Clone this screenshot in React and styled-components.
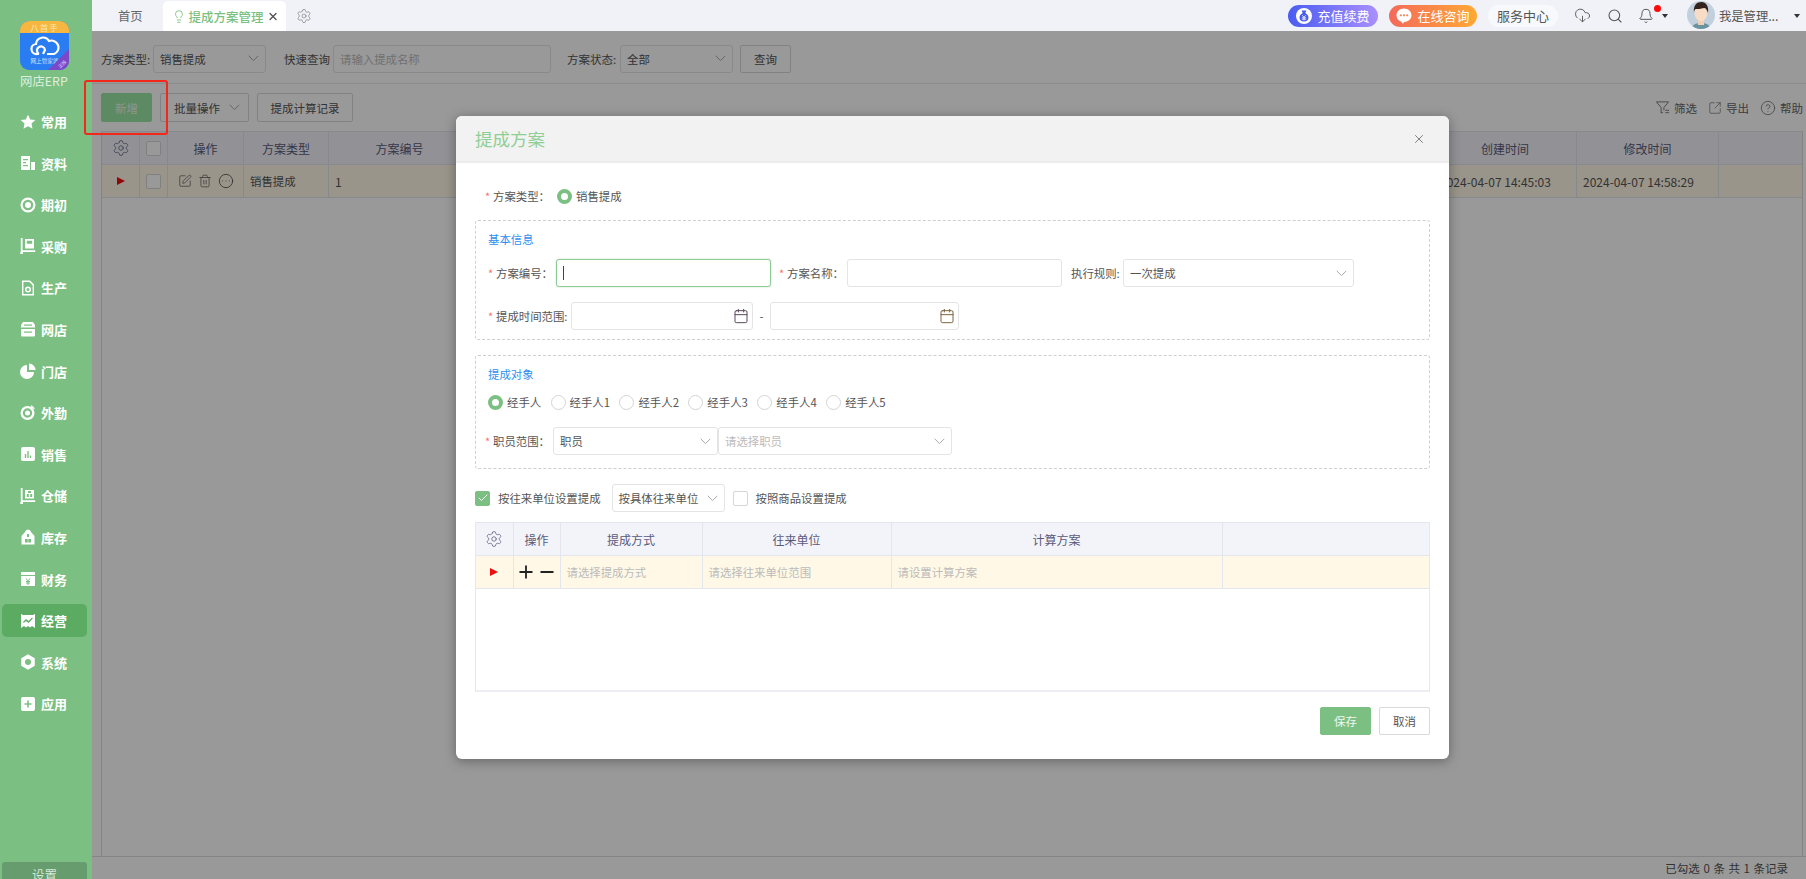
import React from 'react';
import styled, { createGlobalStyle } from 'styled-components';
import { Settings, Calendar, X, Search, Bell, CloudDownload, Lightbulb, SquarePen, Trash2, CircleEllipsis, Plus, Minus, Check, CircleHelp, SquareArrowOutUpRight } from 'lucide-react';

const Global = createGlobalStyle`
  html, body { margin: 0; height: 100%; overflow: hidden; background: #fff; }
  #root { height: 100%; }
  * { box-sizing: border-box; }
  body { font-family: "Noto Sans CJK SC", "Noto Sans", sans-serif; font-size: 11.4px; color: #555; }
`;

const Shell = styled.div`display: flex; width: 100vw; height: 100vh; overflow: hidden;`;

/* Sidebar */
const Sidebar = styled.aside`
  width: 92px; flex: none; background: #7cbf82; display: flex; flex-direction: column;
  align-items: stretch; padding-top: 21px; overflow: hidden; position: relative;
`;
const LogoBox = styled.div`
  width: 49px; height: 49px; margin-left: 20px; border-radius: 9px; overflow: hidden; position: relative;
  background: #2a7cf2; display: flex; flex-direction: column; align-items: center;
`;
const LogoBand = styled.div`
  width: 100%; height: 12px; background: #f6b740; color: #fbe7b0; font-size: 8.5px; line-height: 12px; text-align: center; letter-spacing: 1px;
`;
const LogoSmall = styled.div`
  color: #cfe2ff; font-size: 5.6px; line-height: 8px; white-space: nowrap; margin-top: 0;
`;
const LogoRibbon = styled.div`
  position: absolute; right: 0; bottom: 0; width: 21px; height: 21px; background: #7b49c8;
  clip-path: polygon(100% 0, 100% 100%, 0 100%); display: flex; align-items: flex-end; justify-content: flex-end;
`;
const RibbonText = styled.span`
  color: #e5d6ff; font-size: 4.5px; line-height: 10px; width: 14px; height: 10px; text-align: center; transform: rotate(-45deg); margin: 0 0 1px 0;
`;
const LogoName = styled.div`
  margin: 3px 0 0 20px; color: #dcefdf; font-size: 12.4px; line-height: 17px; white-space: nowrap;
`;
const Nav = styled.nav`display: flex; flex-direction: column; gap: 8.6px; margin-top: 15px;`;
const NavItem = styled.div`
  width: 85px; height: 33px; margin-left: 2px; border-radius: 5px; padding-left: 18px;
  display: flex; align-items: center; gap: 5px; color: #fff; font-size: 13px; font-weight: 700;
  background: ${p => (p.$active ? '#5bab63' : 'transparent')};
  svg { flex: none; }
`;
const SettingBtn = styled.div`
  margin: auto 0 -9px 2px; width: 85px; height: 26px; flex: none; background: #679c6e; border-radius: 3px; color: #d6e8d8;
  font-size: 12.5px; text-align: center; line-height: 26px;
`;

const navIcons = {
  star: <path d="M8 .8l2.2 4.7 5.1.6-3.8 3.5 1 5.1L8 12.2l-4.5 2.5 1-5.1L.7 6.1l5.1-.6z" />,
  doc: <path fillRule="evenodd" d="M1 1h9v14H1zM3 4v1.3h5V4zm0 3v1.3h3V7zm0 3v1.3h5V10zM11 7h4v8h-4z" />,
  ring: <path fillRule="evenodd" d="M8 .5a7.5 7.5 0 100 15 7.500 7.500 0 000-15zm0 2.200a5.300 5.300 0 110 10.600A5.300 5.300 0 018 2.700zm0 2.300a3 3 0 100 6 3 3 0 000-6z" />,
  cart: <path fillRule="evenodd" d="M.8 0h1.800v12.200h12.600V14H2.600a1.400 1.400 0 11-2 0H.8zM5 1h9v9.500H5zm1.800 1.700v3h5.400v-3z" />,
  file: <path fillRule="evenodd" d="M2 .5h8l4 4V15.500H2zM3.400 2v12h9.200V5.200L9.400 2zM8 6.500a3 3 0 110 6 3 3 0 010-6zm0 1.500a1.500 1.500 0 100 3 1.500 1.500 0 000-3z" />,
  shop: <path fillRule="evenodd" d="M3 1h10l2 3v2.500H1V4zM4 3.500V4.800h8V3.500zM1 8h14v6.500a1 1 0 01-1 1H2a1 1 0 01-1-1zm3 2.400v1.300h8v-1.300z" />,
  pie: <path fillRule="evenodd" d="M7 2v7h7a7 7 0 11-7-7zM9 .5a6.500 6.500 0 016.500 6.500H9z" />,
  target: <path fillRule="evenodd" d="M7.500 1a7 7 0 017 7 7 7 0 11-7-7zm0 2.300a4.700 4.700 0 100 9.400 4.700 4.700 0 000-9.400zm0 2.200a2.500 2.500 0 110 5 2.500 2.500 0 010-5zM11.500 0l3.500 3.500-2 .5-2-2z" />,
  bars: <path fillRule="evenodd" d="M3 1h10a2 2 0 012 2v10a2 2 0 01-2 2H3a2 2 0 01-2-2V3a2 2 0 012-2zm1.800 7v4h1.400V8zm2.500-3v7h1.400V5zm2.500 4.500V12h1.400V9.500z" />,
  store: <path fillRule="evenodd" d="M.8 0h1.800v12.200h12.600V14H2.600a1.400 1.400 0 11-2 0H.8zM5 2h9v8.500H5zm1.800 4v3h2v-3zm3.400 0v3h2V6zM8 3v2h3V3z" />,
  house: <path fillRule="evenodd" d="M8 .5a3 3 0 013 2.500l3.500 4v8.500h-13V7L5 3A3 3 0 018 .5zm-3 9.500v3.500h2.800V10zm3.300 0v3.500H11V10zM7 5v3h2V5z" />,
  money: <path fillRule="evenodd" d="M1 1h14v3H1zM1 5h14v10H1zm5.500 2.500L8 9.500l1.500-2h1L8.600 10H10v1H8.500v.6H10v1H8.500V14h-1v-1.400H6v-1h1.500V11H6v-1h1.400L5.500 7.500z" />,
  chart: <path fillRule="evenodd" d="M1 1l2 1h10l2-1v14l-3-2-2 1.500L8 13l-2 1.500L4 13l-3 2zm2 8l3-3 2.500 2L12 4.500l.8 1L8.500 10 6 8l-2.300 2z" />,
  hex: <path fillRule="evenodd" d="M8 .3l6.800 3.900v7.600L8 15.700 1.200 11.800V4.200zM8 5a3 3 0 100 6 3 3 0 000-6z" />,
  add: <path fillRule="evenodd" d="M3 1h10a2 2 0 012 2v10a2 2 0 01-2 2H3a2 2 0 01-2-2V3a2 2 0 012-2zm4.200 3.500v2.700H4.500v1.600h2.700v2.700h1.600V8.800h2.700V7.200H8.800V4.500z" />,
};
const NavIcon = ({ name }) => <svg width="16" height="16" viewBox="0 0 16 16" fill="#fff">{navIcons[name]}</svg>;

const navData = [
  ['star', '常用'], ['doc', '资料'], ['ring', '期初'], ['cart', '采购'], ['file', '生产'], ['shop', '网店'], ['pie', '门店'], ['target', '外勤'],
  ['bars', '销售'], ['store', '仓储'], ['house', '库存'], ['money', '财务'], ['chart', '经营'], ['hex', '系统'], ['add', '应用'],
];

/* Top bar */
const Main = styled.div`flex: 1; min-width: 0; display: flex; flex-direction: column;`;
const TopBar = styled.header`
  height: 31px; flex: none; background: #f0f2f7; display: flex; align-items: center; padding: 0 6px 0 26px; position: relative;
`;
const HomeTab = styled.div`font-size: 12.3px; color: #666; margin-right: 20px; line-height: 30px;`;
const ActiveTab = styled.div`
  height: 30px; align-self: flex-end; background: #fff; border-radius: 5px 5px 0 0; display: flex; align-items: center;
  padding: 0 7px 0 9px; width: 123px; color: #7cbf82; font-size: 12.5px; font-weight: 500; gap: 3px;
  span { flex: 1; white-space: nowrap; }
`;
const TabGear = styled.div`margin-left: 10px; display: flex; color: #777;`;
const TopRight = styled.div`margin-left: auto; display: flex; align-items: center; height: 100%;`;
const Pill = styled.div`
  width: ${p => p.$w}px; height: 22px; border-radius: 11px; margin-right: ${p => p.$mr}px; background: ${p => p.$bg};
  color: ${p => p.$color}; font-size: 13px; display: flex; align-items: center; justify-content: center; gap: 5px; white-space: nowrap;
`;
const TopIcon = styled.div`display: flex; color: #555; margin-right: ${p => p.$mr}px; position: relative;`;
const RedDot = styled.div`position: absolute; top: -3px; right: -7px; width: 7px; height: 7px; border-radius: 50%; background: #ff0a0a;`;
const Caret = styled.div`
  width: 0; height: 0; border: 3px solid transparent; border-top: 4px solid #333; border-bottom: 0; margin-right: ${p => p.$mr}px; margin-left: ${p => p.$ml || 0}px;
`;
const UserName = styled.div`font-size: 12.3px; color: #555; white-space: nowrap; width: 66px; margin-left: 4px;`;
const Avatar = () => (
  <svg width="28" height="29" viewBox="0 0 28 29">
    <defs><clipPath id="av"><circle cx="14" cy="14" r="14" /></clipPath></defs>
    <g clipPath="url(#av)">
      <rect width="28" height="29" fill="#c2cfdd" />
      <path d="M4 29c1-6 6-7 10-7s9 1 10 7z" fill="#6a93a0" />
      <rect x="11" y="17" width="6" height="7" fill="#f1cfb5" />
      <ellipse cx="14" cy="12" rx="6.500" ry="8" fill="#f8dcc5" />
      <path d="M7 12C6 4 10 1 14.500 1S22 5 21 12c-1-3-2-5-4-5-3 1-7 1-8 1s-2 1-2 4z" fill="#33231c" />
    </g>
  </svg>
);

/* Content */
const Content = styled.div`flex: 1; min-height: 0; position: relative; display: flex; flex-direction: column; background: #fff;`;
const FilterBar = styled.div`
  height: 53px; flex: none; border-bottom: 1px solid #e9e9e9; display: flex; align-items: center; padding: 3px 0 0 9px; font-size: 11.5px;
`;
const Label = styled.div`
  flex: none; white-space: nowrap; width: ${p => p.$w}px; margin-left: ${p => p.$ml || 0}px; color: #555; display: flex; align-items: center;
`;
const Star = styled.i`font-style: normal; color: #f5736a; width: 8px; flex: none; font-size: 11px;`;
const Field = styled.div`
  flex: none; width: ${p => p.$w}px; height: ${p => p.$h || 28}px; border: 1px solid ${p => (p.$focus ? '#8fcb95' : '#e4e4e4')}; border-radius: 3px; background: #fff;
  margin-left: ${p => p.$ml || 0}px; display: flex; align-items: center; padding: 0 ${p => p.$pr || 6}px 0 6px; justify-content: space-between;
  color: ${p => (p.$ph ? '#bbb' : '#555')}; white-space: nowrap; font-size: 11.4px;
  box-shadow: ${p => (p.$focus ? '0 0 2px #b5dfb9' : 'none')};
`;
const TextCaret = styled.div`width: 1px; height: 14px; background: #444;`;
const Chevron = () => <svg width="11" height="7" viewBox="0 0 11 7" fill="none" stroke="#a9a9a9" strokeWidth="1"><path d="M.7.8l4.800 4.800L10.300.8" /></svg>;

const ToolBar = styled.div`height: 47px; flex: none; padding: 9px 3px 0 9px; display: flex; align-items: flex-start;`;
const Btn = styled.div`
  flex: none; width: ${p => p.$w}px; height: ${p => p.$h || 29}px; margin-left: ${p => p.$ml || 0}px; margin-right: ${p => p.$mr || 0}px; border-radius: 2px;
  background: ${p => p.$bg || '#fff'}; color: ${p => (p.$bg ? '#eef8f0' : '#555')}; padding: ${p => (p.$split ? '0 8px 0 13px' : '0')};
  border: 1px solid ${p => p.$bg || '#d9d9d9'}; display: flex; align-items: center; justify-content: ${p => (p.$split ? 'space-between' : 'center')}; font-size: 11.5px; white-space: nowrap;
`;
const ToolLinks = styled.div`margin-left: auto; display: flex; align-items: center; height: 29px; color: #666; font-size: 11.5px;`;
const ToolLink = styled.div`display: flex; align-items: center; gap: 4px; margin-left: 11px; color: #666; svg { flex: none; }`;

const TableBox = styled.div`
  flex: 1; min-height: 0; margin: 0 3px 0 9px; border-left: 1px solid #ddd; border-right: 1px solid #ddd;
`;
const HeadRow = styled.div`
  display: grid; grid-template-columns: ${p => p.$cols}; height: ${p => p.$h}px; background: #f3f4fa; border-top: 1px solid #e3e5ef; border-bottom: 1px solid #e3e5ef;
`;
const BodyRow = styled.div`
  display: grid; grid-template-columns: ${p => p.$cols}; height: ${p => p.$h}px; background: #fff8e6; border-bottom: 1px solid #e3e5ef;
`;
const Cell = styled.div`
  display: flex; align-items: center; justify-content: ${p => (p.$center ? 'center' : 'flex-start')}; gap: ${p => p.$gap || 0}px; padding: 0 ${p => (p.$center ? 0 : 6)}px;
  border-right: 1px solid #e3e5ef; color: ${p => (p.$ph ? '#bbb' : p.$head ? '#5a5a7a' : '#555')}; font-size: ${p => p.$fs || 12}px; white-space: nowrap; overflow: hidden;
  &:last-child { border-right: 0; }
`;
const Box = styled.div`
  width: 15px; height: 15px; border: 1px solid #d6d6d6; border-radius: 2px; background: ${p => (p.$on ? '#7cbf82' : '#fff')}; flex: none;
  display: flex; align-items: center; justify-content: center; color: #fff;
  margin-right: ${p => p.$mr || 0}px; margin-left: ${p => p.$ml || 0}px; border-color: ${p => (p.$on ? '#7cbf82' : '#d6d6d6')};
`;
const RedTri = styled.div`width: 0; height: 0; border-left: 8px solid #f20d0d; border-top: 4px solid transparent; border-bottom: 4px solid transparent;`;
const FootBar = styled.div`
  height: 23px; flex: none; border-top: 1px solid #ddd; display: flex; align-items: center; justify-content: flex-end; padding-right: 18px; font-size: 11.5px; word-spacing: 1px; color: #555;
`;

/* Overlay + modal */
const Dim = styled.div`position: absolute; inset: 0; background: rgba(0,0,0,.4); padding: 85px 0 0 364px;`;
const Modal = styled.div`
  width: 993px; height: 643px; background: #fff; border-radius: 6px; box-shadow: 0 2px 12px rgba(0,0,0,.35); display: flex; flex-direction: column; overflow: hidden;
`;
const ModalHead = styled.div`
  height: 47px; flex: none; background: #f2f2f2; border-bottom: 2px solid #ececec; display: flex; align-items: center; justify-content: space-between; padding: 0 23px 0 19px;
`;
const ModalTitle = styled.div`font-size: 17.5px; color: #8fcf96;`;
const CloseBtn = styled.div`display: flex; color: #777;`;
const ModalBody = styled.div`flex: 1; padding: 0 19px;`;
const TypeRow = styled.div`height: 57px; padding: 9px 0 0 10px; display: flex; align-items: center;`;
const Radio = styled.div`
  width: 15px; height: 15px; flex: none; border-radius: 50%; background: #fff; border: ${p => (p.$on ? '4px solid #7cbf82' : '1px solid #d4d4d4')};
  margin-right: 4px; margin-left: ${p => p.$ml || 0}px;
`;
const Section = styled.section`
  height: ${p => p.$h}px; border: 1px dashed #cfcfcf; border-radius: 3px; padding: 10px 12px 0; margin-top: ${p => p.$mt || 0}px;
`;
const SectionTitle = styled.div`height: 16px; line-height: 16px; color: #2f8ff0; font-size: 11.4px;`;
const FormRow = styled.div`display: flex; align-items: center; height: 28px; margin-top: ${p => p.$mt}px; margin-left: ${p => p.$ml || 0}px;`;
const RadioRow = styled.div`display: flex; align-items: center; height: 16px; margin-top: 12px; gap: 9.4px;`;
const RadioItem = styled.div`display: flex; align-items: center; white-space: nowrap;`;
const Dash = styled.div`width: 17px; flex: none; text-align: center;`;
const CheckRow = styled.div`display: flex; align-items: center; height: 28px; margin-top: 15px;`;
const CheckLabel = styled.div`flex: none; white-space: nowrap; margin-left: 8px; color: #555;`;
const SubTable = styled.div`height: 170px; margin-top: 10px; border-left: 1px solid #e6e7f0; border-right: 1px solid #e6e7f0; border-bottom: 2px solid #eceef3;`;
const ActionRow = styled.div`display: flex; justify-content: flex-end; gap: 8px; margin-top: 15px;`;
const HelpBox = styled.div`
  position: absolute; left: -8px; top: 49px; width: 84px; height: 55px; border: 2px solid #f4281a; border-radius: 3px; pointer-events: none;
`;

const mainCols = '38px 28px 76px 85px 142px 1fr 143px 142px 83px';
const subCols = '37.5px 47px 142px 189px 331px 1fr';

export default function App() {
  return (
    <Shell>
      <Global />
      <Sidebar>
        <LogoBox>
          <LogoBand>八首手</LogoBand>
          <svg width="30" height="21" viewBox="0 0 30 21" fill="none" stroke="#fff" strokeWidth="2.200" style={{ marginTop: 3 }}>
            <path d="M9 18H7a5 5 0 01-1-10 7 7 0 0113-3 6 6 0 015 13h-7" />
            <path d="M9 18a4 4 0 010-7 4 4 0 016 3l-2 4" />
          </svg>
          <LogoSmall>网上管家婆</LogoSmall>
          <LogoRibbon><RibbonText>正版</RibbonText></LogoRibbon>
        </LogoBox>
        <LogoName>网店ERP</LogoName>
        <Nav>
          {navData.map(([icon, text]) => (
            <NavItem key={text} $active={text === '经营'}><NavIcon name={icon} />{text}</NavItem>
          ))}
        </Nav>
        <SettingBtn>设置</SettingBtn>
      </Sidebar>
      <Main>
        <TopBar>
          <HomeTab>首页</HomeTab>
          <ActiveTab><Lightbulb size={15} strokeWidth={1.5} /><span>提成方案管理</span><X size={13} color="#555" strokeWidth={2.6} /></ActiveTab>
          <TabGear><Settings size={16} strokeWidth={1} /></TabGear>
          <TopRight>
            <Pill $w={90} $mr={11} $bg="linear-gradient(90deg,#4a5cf0,#a98fff)" $color="#fff">
              <svg width="16" height="16" viewBox="0 0 16 16">
                <circle cx="8" cy="8" r="8" fill="#fff" />
                <path d="M5.500 2.500h5L9.300 5c2 1 3.200 2.800 3.200 4.700 0 2.300-1.800 3.800-4.500 3.800s-4.500-1.500-4.500-3.800C3.500 7.800 4.700 6 6.700 5z" fill="#4a5cf0" />
                <path d="M6.300 7.300L8 9.200l1.700-1.900M5.900 9.800h4.200M5.900 11.200h4.200M8 9.200v3.200" fill="none" stroke="#fff" strokeWidth=".8" />
              </svg>
              充值续费
            </Pill>
            <Pill $w={88} $mr={11} $bg="linear-gradient(90deg,#f46a5b,#ffa934)" $color="#fff">
              <svg width="16" height="16" viewBox="0 0 16 16"><path d="M8 .5c4.200 0 7.500 2.900 7.500 6.800S12.200 14 8 14l-1 1.800L5 13.600C2.300 12.700.5 10.400.5 7.300.5 3.400 3.800.5 8 .5z" fill="#fff" /><circle cx="4.800" cy="7.300" r="1.100" fill="#f4845a" /><circle cx="8" cy="7.300" r="1.100" fill="#f4845a" /><circle cx="11.200" cy="7.300" r="1.100" fill="#f4845a" /></svg>
              在线咨询
            </Pill>
            <Pill $w={70} $mr={16} $bg="#f7f9fd" $color="#555">服务中心</Pill>
            <TopIcon $mr={16}><CloudDownload size={17} strokeWidth={1.3} /></TopIcon>
            <TopIcon $mr={15}><Search size={16} strokeWidth={1.6} /></TopIcon>
            <TopIcon $mr={0}><Bell size={16} strokeWidth={1.5} /><RedDot /></TopIcon>
            <Caret $ml={8} $mr={19} />
            <Avatar />
            <UserName>我是管理...</UserName>
            <Caret $ml={9} $mr={0} />
          </TopRight>
        </TopBar>
        <Content>
          <FilterBar>
            <Label $w={52}>方案类型:</Label>
            <Field $w={113}>销售提成<Chevron /></Field>
            <Label $w={49} $ml={18}>快速查询</Label>
            <Field $w={218} $ph>请输入提成名称</Field>
            <Label $w={53} $ml={16}>方案状态:</Label>
            <Field $w={113}>全部<Chevron /></Field>
            <Btn $w={51} $ml={7} $h={28}>查询</Btn>
          </FilterBar>
          <ToolBar>
            <Btn $bg="#99e6a6" $w={51} $mr={8}>新增</Btn>
            <Btn $split $w={89} $mr={8}>批量操作<Chevron /></Btn>
            <Btn $w={96}>提成计算记录</Btn>
            <ToolLinks>
              <ToolLink>
                <svg width="15" height="15" viewBox="0 0 16 16" fill="none" stroke="#777" strokeWidth="1"><path d="M1.500 2h13l-5 6v3M1.500 2l5 6v6l2-1" /><path d="M11 11h4M11 13.500h4" /></svg>
                筛选
              </ToolLink>
              <ToolLink><SquareArrowOutUpRight size={14} strokeWidth={1.1} />导出</ToolLink>
              <ToolLink><CircleHelp size={16} strokeWidth={1.1} />帮助</ToolLink>
            </ToolLinks>
          </ToolBar>
          <TableBox>
            <HeadRow $cols={mainCols} $h={34}>
              <Cell $center $head><Settings size={18} strokeWidth={1} /></Cell>
              <Cell $center><Box /></Cell>
              <Cell $center $head>操作</Cell>
              <Cell $center $head>方案类型</Cell>
              <Cell $center $head>方案编号</Cell>
              <Cell $center $head>方案名称</Cell>
              <Cell $center $head>创建时间</Cell>
              <Cell $center $head>修改时间</Cell>
              <Cell />
            </HeadRow>
            <BodyRow $cols={mainCols} $h={33}>
              <Cell $center><RedTri /></Cell>
              <Cell $center><Box /></Cell>
              <Cell $center $gap={6}><SquarePen size={14} strokeWidth={1.2} /><Trash2 size={14} strokeWidth={1.2} /><CircleEllipsis size={16} strokeWidth={1.3} /></Cell>
              <Cell $fs={11.4}>销售提成</Cell>
              <Cell>1</Cell>
              <Cell />
              <Cell>2024-04-07 14:45:03</Cell>
              <Cell>2024-04-07 14:58:29</Cell>
              <Cell />
            </BodyRow>
          </TableBox>
          <FootBar>已勾选 0 条 共 1 条记录</FootBar>
          <Dim>
            <Modal>
              <ModalHead>
                <ModalTitle>提成方案</ModalTitle>
                <CloseBtn><X size={14} strokeWidth={1.6} /></CloseBtn>
              </ModalHead>
              <ModalBody>
                <TypeRow>
                  <Label $w={72}><Star>*</Star>方案类型：</Label>
                  <RadioItem><Radio $on />销售提成</RadioItem>
                </TypeRow>
                <Section $h={120}>
                  <SectionTitle>基本信息</SectionTitle>
                  <FormRow $mt={12}>
                    <Label $w={68}><Star>*</Star>方案编号：</Label>
                    <Field $w={215} $focus><TextCaret /></Field>
                    <Label $w={68} $ml={8}><Star>*</Star>方案名称：</Label>
                    <Field $w={215} />
                    <Label $w={52} $ml={9}>执行规则:</Label>
                    <Field $w={231}>一次提成<Chevron /></Field>
                  </FormRow>
                  <FormRow $mt={15}>
                    <Label $w={83}><Star>*</Star>提成时间范围:</Label>
                    <Field $w={182} $pr={3}><span /><Calendar size={16} strokeWidth={1.5} color="#5a4a5a" /></Field>
                    <Dash>-</Dash>
                    <Field $w={189} $pr={3}><span /><Calendar size={16} strokeWidth={1.5} color="#7a6440" /></Field>
                  </FormRow>
                </Section>
                <Section $h={114} $mt={15}>
                  <SectionTitle>提成对象</SectionTitle>
                  <RadioRow>
                    {['经手人', '经手人1', '经手人2', '经手人3', '经手人4', '经手人5'].map((t, i) => (
                      <RadioItem key={t}><Radio $on={i === 0} />{t}</RadioItem>
                    ))}
                  </RadioRow>
                  <FormRow $mt={17} $ml={-3}>
                    <Label $w={68}><Star>*</Star>职员范围：</Label>
                    <Field $w={165}>职员<Chevron /></Field>
                    <Field $w={234} $ph>请选择职员<Chevron /></Field>
                  </FormRow>
                </Section>
                <CheckRow>
                  <Box $on><Check size={12} strokeWidth={2} /></Box>
                  <CheckLabel>按往来单位设置提成</CheckLabel>
                  <Field $w={113} $ml={11}>按具体往来单位<Chevron /></Field>
                  <Box $ml={8} />
                  <CheckLabel>按照商品设置提成</CheckLabel>
                </CheckRow>
                <SubTable>
                  <HeadRow $cols={subCols} $h={34}>
                    <Cell $center $head><Settings size={18} strokeWidth={1} /></Cell>
                    <Cell $center $head>操作</Cell>
                    <Cell $center $head>提成方式</Cell>
                    <Cell $center $head>往来单位</Cell>
                    <Cell $center $head>计算方案</Cell>
                    <Cell />
                  </HeadRow>
                  <BodyRow $cols={subCols} $h={33}>
                    <Cell $center><RedTri /></Cell>
                    <Cell $center $gap={1}><Plus size={20} strokeWidth={2.2} color="#222" /><Minus size={20} strokeWidth={2.2} color="#222" /></Cell>
                    <Cell $ph $fs={11.4}>请选择提成方式</Cell>
                    <Cell $ph $fs={11.4}>请选择往来单位范围</Cell>
                    <Cell $ph $fs={11.4}>请设置计算方案</Cell>
                    <Cell />
                  </BodyRow>
                </SubTable>
                <ActionRow>
                  <Btn $bg="#7cbf82" $w={51} $h={28}>保存</Btn>
                  <Btn $w={51} $h={28}>取消</Btn>
                </ActionRow>
              </ModalBody>
            </Modal>
          </Dim>
          <HelpBox />
        </Content>
      </Main>
    </Shell>
  );
}
